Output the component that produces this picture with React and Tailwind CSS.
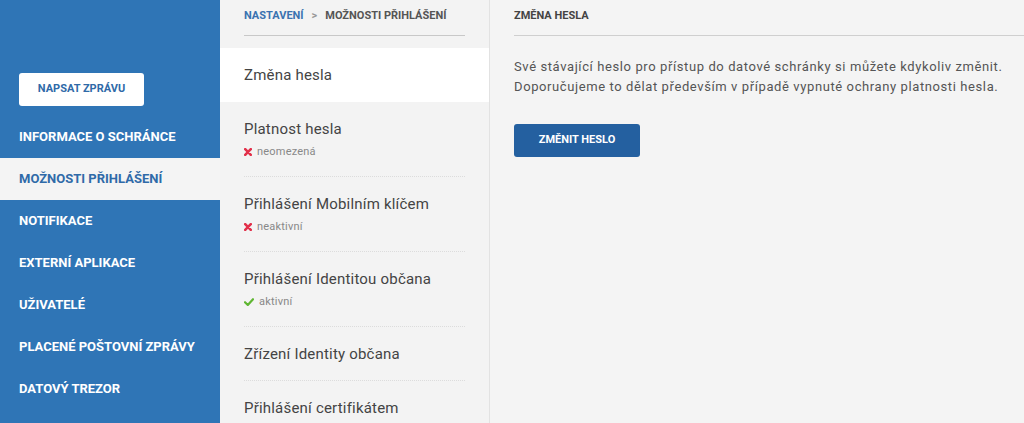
import React from "react";

const menu = [
  "INFORMACE O SCHRÁNCE",
  "MOŽNOSTI PŘIHLÁŠENÍ",
  "NOTIFIKACE",
  "EXTERNÍ APLIKACE",
  "UŽIVATELÉ",
  "PLACENÉ POŠTOVNÍ ZPRÁVY",
  "DATOVÝ TREZOR",
];

const options = [
  { title: "Platnost hesla", status: "neomezená", ok: false },
  { title: "Přihlášení Mobilním klíčem", status: "neaktivní", ok: false },
  { title: "Přihlášení Identitou občana", status: "aktivní", ok: true },
  { title: "Zřízení Identity občana" },
  { title: "Přihlášení certifikátem" },
];

// small status marks next to option state
const Cross = () => (
  <svg width="8" height="8" viewBox="0 0 8 8" className="mr-[5px]">
    <path d="M1.2 1.2L6.8 6.8M6.8 1.2L1.2 6.8" stroke="#e2304a" strokeWidth="2.6" strokeLinecap="round" />
  </svg>
);

const Check = () => (
  <svg width="10" height="8" viewBox="0 0 10 8" className="mr-[5px]">
    <path d="M1 4.2L3.8 7L9 1.2" fill="none" stroke="#5fb632" strokeWidth="2.2" strokeLinecap="round" strokeLinejoin="round" />
  </svg>
);

const App = () => {
  const active = "MOŽNOSTI PŘIHLÁŠENÍ";

  return (
    <div className="flex h-[423px] w-[1024px] overflow-hidden bg-[#f4f4f4] font-['Roboto',sans-serif]">

      {/* left navigation */}
      <aside className="w-[220px] shrink-0 bg-[#2f75b6] pt-[73px]">
        <button className="mb-[10px] ml-[19px] flex h-[33px] w-[125px] items-center justify-center rounded-[3px] bg-white text-[11px] font-bold text-[#2f6aa8]">
          NAPSAT ZPRÁVU
        </button>
        {menu.map((item) => (
          <div
            key={item}
            className={`flex h-[42px] items-center pl-[19px] text-[13px] font-bold ${item === active ? "bg-[#f4f4f4] text-[#2f6aa8]" : "text-white"}`}
          >
            {item}
          </div>
        ))}
      </aside>

      {/* settings list */}
      <section className="w-[270px] shrink-0 border-r border-[#e2e2e2] bg-[#f3f3f3]">
        <div className="mx-6 flex h-[36px] items-center gap-[8px] border-b border-[#c8c8c8] pb-[2px] text-[11px] font-bold">
          <span className="text-[#3a72b0]">NASTAVENÍ</span>
          <span className="text-[#999]">&gt;</span>
          <span className="text-[#555]">MOŽNOSTI PŘIHLÁŠENÍ</span>
        </div>

        <div className="mt-[12px] flex h-[54px] items-center bg-white px-6 text-[15px] tracking-[0.2px] text-[#444]">
          Změna hesla
        </div>

        {options.map((opt) => (
          <div key={opt.title} className="px-6">
            <div className={`${opt.status ? "h-[75px]" : "h-[54px]"} border-b border-dotted border-[#dcdcdc] pt-[17px]`}>
              <div className="text-[15px] leading-[20px] tracking-[0.2px] text-[#444]">{opt.title}</div>
              {opt.status && (
                <div className="mt-[5px] flex items-center text-[11px] tracking-[0.2px] text-[#888]">
                  {opt.ok ? <Check /> : <Cross />}
                  {opt.status}
                </div>
              )}
            </div>
          </div>
        ))}
      </section>

      {/* detail pane */}
      <main className="flex-1 pl-6">
        <div className="flex h-[36px] items-center border-b border-[#cfcfcf] pb-[2px] text-[11px] font-bold text-[#444]">
          ZMĚNA HESLA
        </div>
        <p className="mt-[21px] text-[13px] leading-[20px] tracking-[0.6px] text-[#555]">
          Své stávající heslo pro přístup do datové schránky si můžete kdykoliv změnit.
          <br />
          Doporučujeme to dělat především v případě vypnuté ochrany platnosti hesla.
        </p>
        <button className="mt-[27px] flex h-[33px] w-[126px] items-center justify-center rounded-[3px] bg-[#2460a0] text-[11px] font-bold text-white">
          ZMĚNIT HESLO
        </button>
      </main>
    </div>
  );
};

export default App;
